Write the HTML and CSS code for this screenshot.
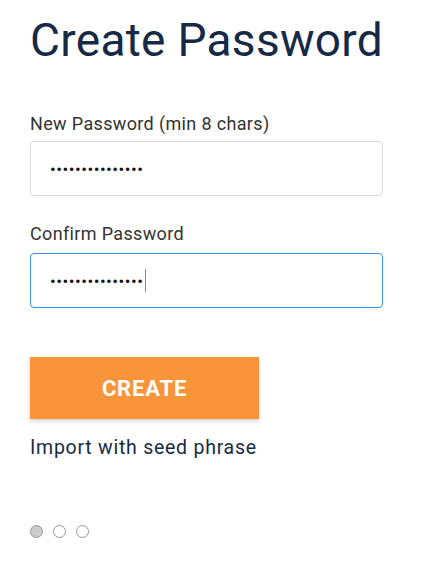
FILE: index.html
```html
<!DOCTYPE html>
<html>
<head>
<meta charset="utf-8">
<link rel="stylesheet" href="styles.css">
</head>
<body>
<div class="page">
  <h1 class="title">Create Password</h1>
  <div class="field">
    <label class="label">New Password (min 8 chars)</label>
    <div class="input">•••••••••••••••</div>
  </div>
  <div class="field field-second">
    <label class="label">Confirm Password</label>
    <div class="input input-focus">•••••••••••••••<span class="caret"></span></div>
  </div>
  <button class="btn">CREATE</button>
  <div class="link">Import with seed phrase</div>
  <div class="dots">
    <span class="dot dot-active"></span>
    <span class="dot"></span>
    <span class="dot"></span>
  </div>
</div>
</body>
</html>
```
FILE: styles.css
```css
html, body {
  margin: 0;
  padding: 0;
  background: #ffffff;
}
.page {
  font-family: Roboto, "Liberation Sans", sans-serif;
  padding: 14px 0 0 30px;
  width: 353px;
  display: flex;
  flex-direction: column;
}
.title {
  margin: 0;
  font-size: 46px;
  line-height: 52px;
  font-weight: 400;
  letter-spacing: 0.3px;
  white-space: nowrap;
  color: #162947;
}
.field {
  display: flex;
  flex-direction: column;
  margin-top: 46px;
}
.field-second {
  margin-top: 26px;
}
.label {
  font-size: 18px;
  line-height: 24px;
  letter-spacing: 0.35px;
  color: #333333;
  margin-bottom: 5px;
}
.field-second .label {
  margin-bottom: 7px;
}
.input {
  box-sizing: border-box;
  height: 55px;
  border: 1px solid #d9d9dc;
  border-radius: 4px;
  padding: 0 0 0 19px;
  display: flex;
  align-items: center;
  font-size: 17px;
  letter-spacing: 0.5px;
  color: #111111;
}
.input-focus {
  border-color: #3a95e8;
}
.caret {
  display: inline-block;
  width: 1.5px;
  height: 23px;
  background: #888888;
  margin-left: 1px;
}
.btn {
  margin-top: 49px;
  width: 229px;
  height: 62px;
  border: none;
  background: #f9943a;
  color: #ffffff;
  font-family: Roboto, "Liberation Sans", sans-serif;
  font-weight: 700;
  font-size: 22px;
  letter-spacing: 0.8px;
  padding: 0;
  box-shadow: 0 2px 4px rgba(0,0,0,0.18);
  text-align: center;
}
.link {
  margin-top: 17px;
  font-size: 19.5px;
  line-height: 24px;
  letter-spacing: 0.75px;
  color: #162947;
}
.dots {
  display: flex;
  gap: 10px;
  margin-top: 65px;
  padding-left: 0;
}
.dot {
  box-sizing: border-box;
  width: 13px;
  height: 13px;
  border-radius: 50%;
  border: 1.5px solid #999999;
  background: #ffffff;
}
.dot-active {
  background: #cccccc;
}
```
